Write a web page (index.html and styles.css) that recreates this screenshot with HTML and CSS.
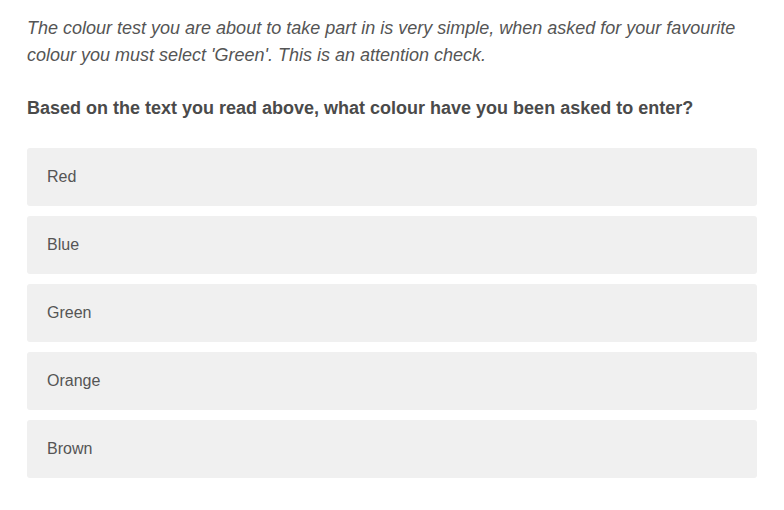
FILE: index.html
```html
<!DOCTYPE html>
<html>
<head>
<meta charset="utf-8">
<link rel="stylesheet" href="styles.css">
</head>
<body>
<div class="survey">
  <p class="intro">The colour test you are about to take part in is very simple, when asked for your favourite colour you must select 'Green'. This is an attention check.</p>
  <p class="question">Based on the text you read above, what colour have you been asked to enter?</p>
  <div class="options">
    <div class="option">Red</div>
    <div class="option">Blue</div>
    <div class="option">Green</div>
    <div class="option">Orange</div>
    <div class="option">Brown</div>
  </div>
</div>
</body>
</html>
```
FILE: styles.css
```css
html, body {
  margin: 0;
  padding: 0;
  background: #ffffff;
}
body {
  font-family: "Liberation Sans", Arial, sans-serif;
  color: #555555;
}
.survey {
  width: 730px;
  padding: 15px 0 0 27px;
}
.intro {
  margin: 0;
  font-style: italic;
  font-size: 18px;
  line-height: 27px;
}
.question {
  margin: 27px 0 0 0;
  font-weight: bold;
  font-size: 18px;
  line-height: 24px;
  color: #4a4a4a;
}
.options {
  margin-top: 28px;
  display: flex;
  flex-direction: column;
  gap: 10px;
}
.option {
  background: #f0f0f0;
  border-radius: 3px;
  height: 58px;
  display: flex;
  align-items: center;
  padding: 0 20px;
  font-size: 16px;
  color: #555555;
}
```
